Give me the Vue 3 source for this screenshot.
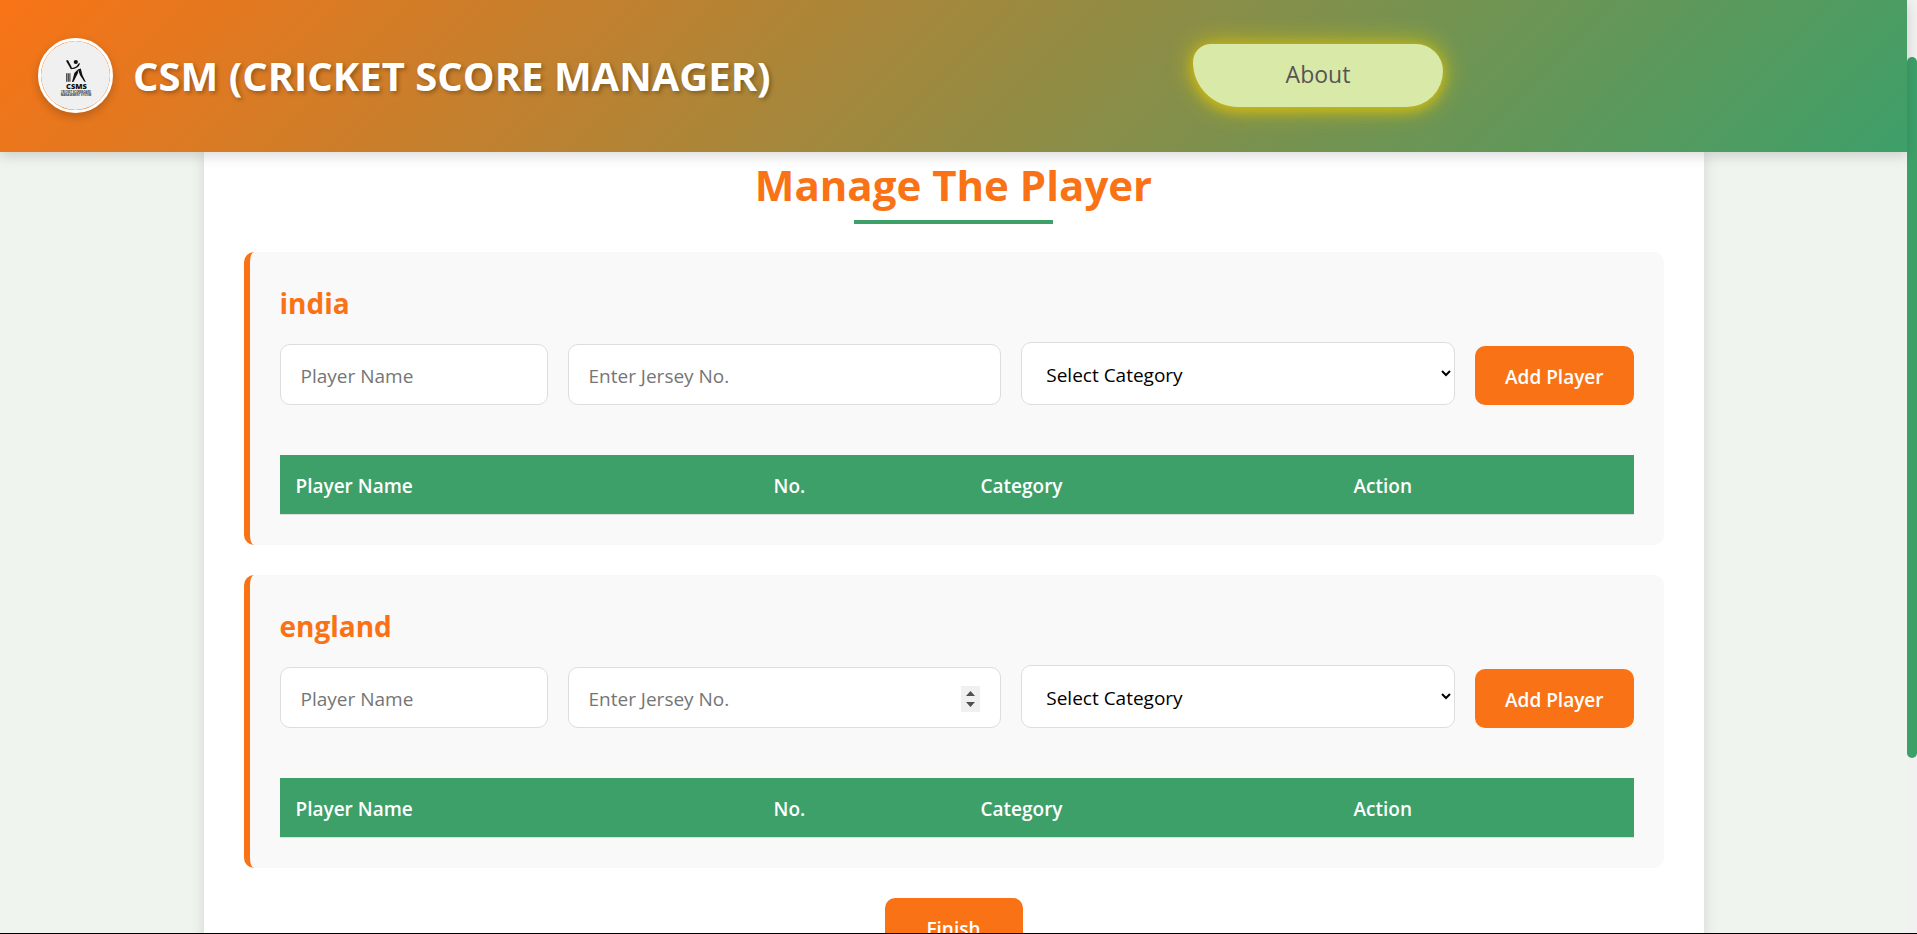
<script setup>
import { ref } from 'vue'

const teams = ref([
  { id: 'india', name: 'india', spinner: false },
  { id: 'england', name: 'england', spinner: true },
])
const columns = ['Player Name', 'No.', 'Category', 'Action']
const categories = ['Batsman', 'Bowler', 'All-rounder', 'Wicket Keeper']
</script>

<template>
  <div class="screen">
    <div class="page">
      <header class="topbar">
        <div class="brand">
          <svg class="logo" viewBox="0 0 69 69" role="img" aria-label="CSMS logo">
            <circle cx="34.5" cy="34.5" r="34.5" fill="#f0f0f0" />
            <circle cx="34.8" cy="21" r="2.1" fill="#111" />
            <path d="M25 19.800l1.900-.8 4 7.600-1.200 1.400z" fill="#111" />
            <path d="M29.600 27.200q5.400 0 8-4.600l1.600-.4q-1.600 5.600-9.200 6z" fill="#111" />
            <path d="M36.800 28.600l-3.400 3.400-2.400 8.900 1.400.1 4.600-9z" fill="#111" />
            <path d="M36.800 28.600l3-1 1.600 6.400 3.400 7-1.600-.4-4-6.200z" fill="#111" />
            <path d="M25.700 32.300v8.500M27.300 32.300v8.500M28.900 32.300v8.500" stroke="#333" stroke-width="1.100" />
            <text x="35.500" y="48" text-anchor="middle" font-size="7.500" font-weight="800" fill="#111">CSMS</text>
            <text x="35" y="51.700" text-anchor="middle" font-size="2.700" font-weight="700" fill="#333">CRICKET SCOREBOARD</text>
            <text x="35" y="54.700" text-anchor="middle" font-size="2.700" font-weight="700" fill="#333">MANAGEMENT SYSTEM</text>
          </svg>
          <h1 class="title">CSM (CRICKET SCORE MANAGER)</h1>
        </div>
        <nav class="nav"><a class="about" href="#about">About</a></nav>
      </header>

      <main class="content">
        <h2 class="heading">Manage The Player</h2>

        <section v-for="team in teams" :key="team.id" class="team">
          <h3 class="team-name">{{ team.name }}</h3>
          <form class="form" @submit.prevent>
            <input class="field name" type="text" placeholder="Player Name" :aria-label="`Player name, ${team.name}`" />
            <input
              class="field jersey"
              :class="{ spin: team.spinner }"
              type="number"
              placeholder="Enter Jersey No."
              :aria-label="`Jersey number, ${team.name}`"
            />
            <select class="field category" :aria-label="`Category, ${team.name}`">
              <option value="">Select Category</option>
              <option v-for="c in categories" :key="c">{{ c }}</option>
            </select>
            <button class="button" type="submit">Add Player</button>
          </form>
          <table class="players">
            <colgroup>
              <col class="col-name" />
              <col class="col-no" />
              <col class="col-category" />
              <col class="col-action" />
            </colgroup>
            <thead>
              <tr>
                <th v-for="c in columns" :key="c" scope="col">{{ c }}</th>
              </tr>
            </thead>
            <tbody></tbody>
          </table>
        </section>

        <button class="button finish" type="button">Finish</button>
      </main>
    </div>
    <div class="scrollbar" aria-hidden="true"><div class="thumb"></div></div>
  </div>
</template>

<style>
body {
  background: #eff4ee;
}
</style>

<style scoped>
.screen {
  display: flex;
  height: 100vh;
  box-sizing: border-box;
  border-bottom: 1px solid #000;
  overflow: hidden;
  background: #eff4ee;
  font-family: "Segoe UI", "Open Sans", "Noto Sans", sans-serif;
}
.page {
  flex: 1;
  min-width: 0;
  display: flex;
  flex-direction: column;
}
.topbar {
  position: relative;
  z-index: 1;
  flex: none;
  display: flex;
  align-items: flex-start;
  justify-content: space-between;
  box-sizing: border-box;
  height: 152px;
  padding: 38px;
  background: linear-gradient(135deg, #f97316, #3da069);
  box-shadow: 0 4px 12px rgba(0, 0, 0, 0.15);
}
.brand {
  display: flex;
  align-items: center;
  gap: 20px;
}
.logo {
  box-sizing: border-box;
  width: 75px;
  height: 75px;
  border: 3px solid #fff;
  border-radius: 50%;
  box-shadow: 0 4px 10px rgba(0, 0, 0, 0.2);
}
.title {
  margin: 0;
  font-size: 40px;
  line-height: 52px;
  font-weight: 700;
  white-space: nowrap;
  color: #fff;
  text-shadow: 2px 2px 4px rgba(0, 0, 0, 0.3);
}
.nav {
  width: 676px;
  padding-top: 6px;
}
.about {
  display: block;
  box-sizing: border-box;
  width: 250px;
  padding-bottom: 2px;
  border-radius: 20px 30px 40px 50px;
  background: #d9e9a8;
  box-shadow: 0 4px 12px rgba(230, 195, 0, 0.55), 0 0 26px rgba(235, 205, 0, 0.8);
  font-size: 23px;
  line-height: 61px;
  text-align: center;
  text-decoration: none;
  color: #555;
}
.content {
  flex: none;
  align-self: center;
  display: flex;
  flex-direction: column;
  align-items: center;
  gap: 30px;
  box-sizing: border-box;
  width: 100%;
  max-width: 1500px;
  padding: 0 40px 40px;
  background: #fff;
  box-shadow: 0 0 14px rgba(0, 0, 0, 0.12);
}
.heading {
  display: flex;
  flex-direction: column;
  align-items: center;
  margin: 0 0 -2px;
  padding-top: 4px;
  font-size: 42px;
  line-height: 58px;
  font-weight: 700;
  color: #f97316;
}
.heading::after {
  content: "";
  width: 50%;
  height: 4px;
  margin-top: 6px;
  background: #3da069;
}
.team {
  align-self: stretch;
  padding: 30px;
  border-left: 6px solid #f97316;
  border-radius: 10px;
  background: #f9f9f9;
}
.team-name {
  margin: 0 0 18px;
  font-size: 28px;
  line-height: 42px;
  font-weight: 700;
  color: #f97316;
}
.form {
  display: flex;
  align-items: flex-end;
  gap: 20px;
  margin-bottom: 50px;
}
.field {
  box-sizing: border-box;
  min-width: 0;
  margin: 0;
  padding: 17px 20px 15px;
  border: 1px solid #ddd;
  border-radius: 10px;
  background: #fff;
  font-family: inherit;
  font-size: 19px;
  line-height: 27px;
  color: #000;
}
.field::placeholder {
  color: #757575;
}
.name {
  width: 268px;
  height: 61px;
}
.jersey {
  flex: 1;
  height: 61px;
}
.spin::-webkit-inner-spin-button {
  appearance: none;
  width: 19px;
  height: 26px;
  opacity: 1;
  background: #f0f0f0
    url("data:image/svg+xml,%3Csvg xmlns='http://www.w3.org/2000/svg' width='19' height='26'%3E%3Cpath d='M5 10h9l-4.500-5zM5 16h9l-4.500 5z' fill='%23505050'/%3E%3C/svg%3E")
    center no-repeat;
}
.category {
  flex: 1;
  height: 63px;
}
.button {
  flex: none;
  min-width: 138px;
  padding: 18px 30px 14px;
  border: 0;
  border-radius: 10px;
  background: #f97316;
  font-family: inherit;
  font-size: 19px;
  line-height: 27px;
  font-weight: 600;
  color: #fff;
  cursor: pointer;
}
.players {
  width: 100%;
  border-collapse: collapse;
}
.col-name {
  width: 478px;
}
.col-no {
  width: 207px;
}
.col-category {
  width: 373px;
}
.col-action {
  width: 296px;
}
.players th {
  padding: 18px 16px 14px;
  border-bottom: 1px solid #ddd;
  background: #3da069;
  font-size: 19px;
  line-height: 27px;
  font-weight: 600;
  text-align: left;
  color: #fff;
}
.scrollbar {
  flex: none;
  width: 10px;
  background: #f1f1f1;
}
.thumb {
  height: 75vh;
  margin-top: 57px;
  border-radius: 5px;
  background: #3da069;
}
</style>
